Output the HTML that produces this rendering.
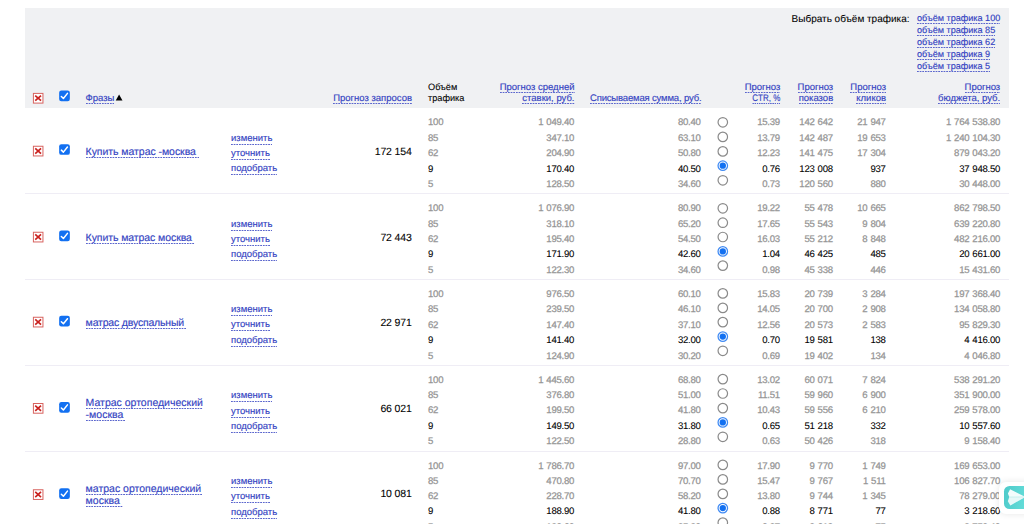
<!DOCTYPE html>
<html lang="ru"><head><meta charset="utf-8"><title>Прогноз бюджета</title>
<style>
html,body{margin:0;padding:0;background:#fff;width:1024px;height:524px;overflow:hidden;}
#w{width:1024px;height:524px;overflow:hidden;position:relative;font-family:"Liberation Sans",sans-serif;color:#000;text-rendering:geometricPrecision;}
.hd{position:absolute;left:25px;top:8px;width:984px;height:100px;background:#f0f1f3;}
.t{position:absolute;white-space:nowrap;line-height:12px;-webkit-text-stroke:0.25px currentColor;}
.r{text-align:right;}
.n{font-size:9.6px;letter-spacing:-0.26px;word-spacing:0.6px;}
.l{color:#3443c2;font-size:9.5px;letter-spacing:0px;-webkit-text-stroke-width:0.15px;}
.l span{background-image:linear-gradient(to right,#5a65cd 60%,rgba(255,255,255,0) 60%);background-size:2.67px 1px;background-repeat:repeat-x;background-position:0 100%;padding-bottom:1px;}
.hb{font-size:9.2px;}
.sb{font-size:10px;letter-spacing:0px;}
.sl{font-size:9.1px;letter-spacing:0px;}
.g{color:#959595;}
.b{color:#000;-webkit-text-stroke-width:0.08px;}
.big{font-size:10.5px;letter-spacing:-0.14px;color:#000;-webkit-text-stroke-width:0.08px;}
.ph{font-size:10.5px;letter-spacing:0px;}
.ph span,.hl span{padding-bottom:0px;}
.sep{position:absolute;left:25px;width:984px;height:1px;background:#efedf5;}
.x{position:absolute;width:9px;height:9px;border:1px solid #d8635f;background:#fff;}
.x svg,.cb svg{position:absolute;left:0;top:0;}
.cb{position:absolute;width:11px;height:11px;border-radius:2px;background:#1270f1;}
.rd{position:absolute;box-sizing:border-box;width:10.7px;height:10.7px;border-radius:50%;border:1.2px solid #8a8a8a;background:#fff;}
.rd.on{border-color:#1270f1;border-width:1.25px;}
.rd.on i{position:absolute;left:50%;top:50%;width:5.6px;height:5.6px;margin:-2.8px 0 0 -2.8px;border-radius:50%;background:#1270f1;}
.rs{position:absolute;}
.fl{position:absolute;left:999px;top:481.5px;width:40px;height:32px;border-radius:7px;background:#fff;box-shadow:0 0 7px rgba(0,0,0,0.10);}
.fl b{position:absolute;left:5px;top:4.8px;width:36px;height:22.4px;border-radius:5.5px;background:linear-gradient(100deg,#4ecaca,#63dcd8 60%);display:block;}
</style></head><body><div id="w">

<div class="hd"></div>
<svg class="rs" width="14" height="14" style="left:31px;top:91px"><rect x="2.4" y="2.4" width="9.55" height="9.7" fill="#fff" stroke="#d8635f" stroke-width="1"/><path d="M4.23 4.6L10.03 9.7M10.03 4.6L4.23 9.7" stroke="#c9211e" stroke-width="1.7" fill="none"/></svg>
<svg class="rs" width="14" height="14" style="left:58px;top:89px"><rect x="1.15" y="1.5" width="10.7" height="10.7" rx="2.2" fill="#1270f1"/><path d="M3.35 7.5L5.4 9.5L9.45 4.4" stroke="#fff" stroke-width="1.5" fill="none" stroke-linecap="round" stroke-linejoin="round"/></svg>
<div class="t l hl" style="left:85.5px;top:93px"><span>Фразы</span><svg width="8" height="7" viewBox="0 0 8 7" style="margin-left:1px"><path d="M0.7 6.6L4.1 0.4L7.5 6.6Z" fill="#000"/></svg></div>
<div class="t r l hl" style="right:612px;top:93px"><span>Прогноз запросов</span></div>
<div class="t hb b" style="left:428px;top:81px">Объём</div>
<div class="t hb b" style="left:428px;top:92px">трафика</div>
<div class="t r l hl" style="right:449.5px;top:82px"><span>Прогноз средней</span></div>
<div class="t r l hl" style="right:449.5px;top:93px"><span>ставки, руб.</span></div>
<div class="t r l hl" style="right:322.6px;top:93px;letter-spacing:-0.16px"><span>Списываемая сумма, руб.</span></div>
<div class="t r l hl" style="right:243.7px;top:82px"><span>Прогноз</span></div>
<div class="t r l hl" style="right:243.7px;top:93px;transform:scaleX(0.84);transform-origin:100% 50%"><span>CTR, %</span></div>
<div class="t r l hl" style="right:190.8px;top:82px"><span>Прогноз</span></div>
<div class="t r l hl" style="right:190.8px;top:93px"><span>показов</span></div>
<div class="t r l hl" style="right:138px;top:82px"><span>Прогноз</span></div>
<div class="t r l hl" style="right:138px;top:93px"><span>кликов</span></div>
<div class="t r l hl" style="right:23.8px;top:82px"><span>Прогноз</span></div>
<div class="t r l hl" style="right:23.8px;top:93px"><span>бюджета, руб.</span></div>
<div class="t r sb b" style="right:114.5px;top:14px">Выбрать объём трафика:</div>
<div class="t l sl" style="left:917px;top:12px"><span>объём трафика 100</span></div>
<div class="t l sl" style="left:917px;top:24px"><span>объём трафика 85</span></div>
<div class="t l sl" style="left:917px;top:36px"><span>объём трафика 62</span></div>
<div class="t l sl" style="left:917px;top:48px"><span>объём трафика 9</span></div>
<div class="t l sl" style="left:917px;top:60px"><span>объём трафика 5</span></div>
<svg class="rs" width="14" height="14" style="left:31px;top:144px"><rect x="2.4" y="2.25" width="9.55" height="9.7" fill="#fff" stroke="#d8635f" stroke-width="1"/><path d="M4.23 4.45L10.03 9.55M10.03 4.45L4.23 9.55" stroke="#c9211e" stroke-width="1.7" fill="none"/></svg>
<svg class="rs" width="14" height="14" style="left:58px;top:143px"><rect x="1.15" y="1.15" width="10.7" height="10.7" rx="2.2" fill="#1270f1"/><path d="M3.35 7.15L5.4 9.15L9.45 4.05" stroke="#fff" stroke-width="1.5" fill="none" stroke-linecap="round" stroke-linejoin="round"/></svg>
<div class="t l ph" style="left:85.6px;top:146px;letter-spacing:-0.05px"><span style="padding-right:3px">Купить матрас -москва</span></div>
<div class="t l" style="left:231px;top:133px"><span>изменить</span></div>
<div class="t l" style="left:231px;top:148px"><span>уточнить</span></div>
<div class="t l" style="left:231px;top:163px"><span>подобрать</span></div>
<div class="t r big" style="right:612.3px;top:146px">172 154</div>
<div class="t n g" style="left:428px;top:117px">100</div>
<div class="t r n g" style="right:449.9px;top:117px">1 049.40</div>
<div class="t r n g" style="right:323.4px;top:117px">80.40</div>
<div class="t r n g" style="right:244.1px;top:117px">15.39</div>
<div class="t r n g" style="right:191.2px;top:117px">142 642</div>
<div class="t r n g" style="right:138.4px;top:117px">21 947</div>
<div class="t r n g" style="right:23.9px;top:117px">1 764 538.80</div>
<svg class="rs" width="14" height="14" style="left:715px;top:115px"><circle cx="7.8" cy="7.3" r="4.75" fill="#fff" stroke="#8a8a8a" stroke-width="1.2"/></svg>
<div class="t n g" style="left:428px;top:133px">85</div>
<div class="t r n g" style="right:449.9px;top:133px">347.10</div>
<div class="t r n g" style="right:323.4px;top:133px">63.10</div>
<div class="t r n g" style="right:244.1px;top:133px">13.79</div>
<div class="t r n g" style="right:191.2px;top:133px">142 487</div>
<div class="t r n g" style="right:138.4px;top:133px">19 653</div>
<div class="t r n g" style="right:23.9px;top:133px">1 240 104.30</div>
<svg class="rs" width="14" height="14" style="left:715px;top:129px"><circle cx="7.8" cy="7.9" r="4.75" fill="#fff" stroke="#8a8a8a" stroke-width="1.2"/></svg>
<div class="t n g" style="left:428px;top:148px">62</div>
<div class="t r n g" style="right:449.9px;top:148px">204.90</div>
<div class="t r n g" style="right:323.4px;top:148px">50.80</div>
<div class="t r n g" style="right:244.1px;top:148px">12.23</div>
<div class="t r n g" style="right:191.2px;top:148px">141 475</div>
<div class="t r n g" style="right:138.4px;top:148px">17 304</div>
<div class="t r n g" style="right:23.9px;top:148px">879 043.20</div>
<svg class="rs" width="14" height="14" style="left:715px;top:144px"><circle cx="7.8" cy="7.4" r="4.75" fill="#fff" stroke="#8a8a8a" stroke-width="1.2"/></svg>
<div class="t n b" style="left:428px;top:164px">9</div>
<div class="t r n b" style="right:449.9px;top:164px">170.40</div>
<div class="t r n b" style="right:323.4px;top:164px">40.50</div>
<div class="t r n b" style="right:244.1px;top:164px">0.76</div>
<div class="t r n b" style="right:191.2px;top:164px">123 008</div>
<div class="t r n b" style="right:138.4px;top:164px">937</div>
<div class="t r n b" style="right:23.9px;top:164px">37 948.50</div>
<svg class="rs" width="14" height="14" style="left:715px;top:158px"><circle cx="7.8" cy="7.7" r="4.75" fill="#fff" stroke="#3f8af4" stroke-width="1.25"/><circle cx="7.8" cy="7.7" r="3.15" fill="#1270f1"/></svg>
<div class="t n g" style="left:428px;top:179px">5</div>
<div class="t r n g" style="right:449.9px;top:179px">128.50</div>
<div class="t r n g" style="right:323.4px;top:179px">34.60</div>
<div class="t r n g" style="right:244.1px;top:179px">0.73</div>
<div class="t r n g" style="right:191.2px;top:179px">120 560</div>
<div class="t r n g" style="right:138.4px;top:179px">880</div>
<div class="t r n g" style="right:23.9px;top:179px">30 448.00</div>
<svg class="rs" width="14" height="14" style="left:715px;top:173px"><circle cx="7.8" cy="7.3" r="4.75" fill="#fff" stroke="#8a8a8a" stroke-width="1.2"/></svg>
<div class="sep" style="top:193px"></div>
<svg class="rs" width="14" height="14" style="left:31px;top:230px"><rect x="2.4" y="2.25" width="9.55" height="9.7" fill="#fff" stroke="#d8635f" stroke-width="1"/><path d="M4.23 4.45L10.03 9.55M10.03 4.45L4.23 9.55" stroke="#c9211e" stroke-width="1.7" fill="none"/></svg>
<svg class="rs" width="14" height="14" style="left:58px;top:229px"><rect x="1.15" y="1.5" width="10.7" height="10.7" rx="2.2" fill="#1270f1"/><path d="M3.35 7.5L5.4 9.5L9.45 4.4" stroke="#fff" stroke-width="1.5" fill="none" stroke-linecap="round" stroke-linejoin="round"/></svg>
<div class="t l ph" style="left:85.6px;top:232px;letter-spacing:-0.08px"><span style="padding-right:3px">Купить матрас москва</span></div>
<div class="t l" style="left:231px;top:219px"><span>изменить</span></div>
<div class="t l" style="left:231px;top:234px"><span>уточнить</span></div>
<div class="t l" style="left:231px;top:249px"><span>подобрать</span></div>
<div class="t r big" style="right:612.3px;top:232px">72 443</div>
<div class="t n g" style="left:428px;top:203px">100</div>
<div class="t r n g" style="right:449.9px;top:203px">1 076.90</div>
<div class="t r n g" style="right:323.4px;top:203px">80.90</div>
<div class="t r n g" style="right:244.1px;top:203px">19.22</div>
<div class="t r n g" style="right:191.2px;top:203px">55 478</div>
<div class="t r n g" style="right:138.4px;top:203px">10 665</div>
<div class="t r n g" style="right:23.9px;top:203px">862 798.50</div>
<svg class="rs" width="14" height="14" style="left:715px;top:201px"><circle cx="7.8" cy="7.3" r="4.75" fill="#fff" stroke="#8a8a8a" stroke-width="1.2"/></svg>
<div class="t n g" style="left:428px;top:219px">85</div>
<div class="t r n g" style="right:449.9px;top:219px">318.10</div>
<div class="t r n g" style="right:323.4px;top:219px">65.20</div>
<div class="t r n g" style="right:244.1px;top:219px">17.65</div>
<div class="t r n g" style="right:191.2px;top:219px">55 543</div>
<div class="t r n g" style="right:138.4px;top:219px">9 804</div>
<div class="t r n g" style="right:23.9px;top:219px">639 220.80</div>
<svg class="rs" width="14" height="14" style="left:715px;top:215px"><circle cx="7.8" cy="7.7" r="4.75" fill="#fff" stroke="#8a8a8a" stroke-width="1.2"/></svg>
<div class="t n g" style="left:428px;top:234px">62</div>
<div class="t r n g" style="right:449.9px;top:234px">195.40</div>
<div class="t r n g" style="right:323.4px;top:234px">54.50</div>
<div class="t r n g" style="right:244.1px;top:234px">16.03</div>
<div class="t r n g" style="right:191.2px;top:234px">55 212</div>
<div class="t r n g" style="right:138.4px;top:234px">8 848</div>
<div class="t r n g" style="right:23.9px;top:234px">482 216.00</div>
<svg class="rs" width="14" height="14" style="left:715px;top:230px"><circle cx="7.8" cy="7.0" r="4.75" fill="#fff" stroke="#8a8a8a" stroke-width="1.2"/></svg>
<div class="t n b" style="left:428px;top:249px">9</div>
<div class="t r n b" style="right:449.9px;top:249px">171.90</div>
<div class="t r n b" style="right:323.4px;top:249px">42.60</div>
<div class="t r n b" style="right:244.1px;top:249px">1.04</div>
<div class="t r n b" style="right:191.2px;top:249px">46 425</div>
<div class="t r n b" style="right:138.4px;top:249px">485</div>
<div class="t r n b" style="right:23.9px;top:249px">20 661.00</div>
<svg class="rs" width="14" height="14" style="left:715px;top:244px"><circle cx="7.8" cy="7.4" r="4.75" fill="#fff" stroke="#3f8af4" stroke-width="1.25"/><circle cx="7.8" cy="7.4" r="3.15" fill="#1270f1"/></svg>
<div class="t n g" style="left:428px;top:265px">5</div>
<div class="t r n g" style="right:449.9px;top:265px">122.30</div>
<div class="t r n g" style="right:323.4px;top:265px">34.60</div>
<div class="t r n g" style="right:244.1px;top:265px">0.98</div>
<div class="t r n g" style="right:191.2px;top:265px">45 338</div>
<div class="t r n g" style="right:138.4px;top:265px">446</div>
<div class="t r n g" style="right:23.9px;top:265px">15 431.60</div>
<svg class="rs" width="14" height="14" style="left:715px;top:258px"><circle cx="7.8" cy="7.6" r="4.75" fill="#fff" stroke="#8a8a8a" stroke-width="1.2"/></svg>
<div class="sep" style="top:279px"></div>
<svg class="rs" width="14" height="14" style="left:31px;top:315px"><rect x="2.4" y="2.25" width="9.55" height="9.7" fill="#fff" stroke="#d8635f" stroke-width="1"/><path d="M4.23 4.45L10.03 9.55M10.03 4.45L4.23 9.55" stroke="#c9211e" stroke-width="1.7" fill="none"/></svg>
<svg class="rs" width="14" height="14" style="left:58px;top:314px"><rect x="1.15" y="1.8" width="10.7" height="10.7" rx="2.2" fill="#1270f1"/><path d="M3.35 7.8L5.4 9.8L9.45 4.7" stroke="#fff" stroke-width="1.5" fill="none" stroke-linecap="round" stroke-linejoin="round"/></svg>
<div class="t l ph" style="left:85.6px;top:317px;letter-spacing:-0.18px"><span style="padding-right:3px">матрас двуспальный</span></div>
<div class="t l" style="left:231px;top:304px"><span>изменить</span></div>
<div class="t l" style="left:231px;top:319px"><span>уточнить</span></div>
<div class="t l" style="left:231px;top:335px"><span>подобрать</span></div>
<div class="t r big" style="right:612.3px;top:317px">22 971</div>
<div class="t n g" style="left:428px;top:289px">100</div>
<div class="t r n g" style="right:449.9px;top:289px">976.50</div>
<div class="t r n g" style="right:323.4px;top:289px">60.10</div>
<div class="t r n g" style="right:244.1px;top:289px">15.83</div>
<div class="t r n g" style="right:191.2px;top:289px">20 739</div>
<div class="t r n g" style="right:138.4px;top:289px">3 284</div>
<div class="t r n g" style="right:23.9px;top:289px">197 368.40</div>
<svg class="rs" width="14" height="14" style="left:715px;top:286px"><circle cx="7.8" cy="7.4" r="4.75" fill="#fff" stroke="#8a8a8a" stroke-width="1.2"/></svg>
<div class="t n g" style="left:428px;top:304px">85</div>
<div class="t r n g" style="right:449.9px;top:304px">239.50</div>
<div class="t r n g" style="right:323.4px;top:304px">46.10</div>
<div class="t r n g" style="right:244.1px;top:304px">14.05</div>
<div class="t r n g" style="right:191.2px;top:304px">20 700</div>
<div class="t r n g" style="right:138.4px;top:304px">2 908</div>
<div class="t r n g" style="right:23.9px;top:304px">134 058.80</div>
<svg class="rs" width="14" height="14" style="left:715px;top:300px"><circle cx="7.8" cy="7.9" r="4.75" fill="#fff" stroke="#8a8a8a" stroke-width="1.2"/></svg>
<div class="t n g" style="left:428px;top:320px">62</div>
<div class="t r n g" style="right:449.9px;top:320px">147.40</div>
<div class="t r n g" style="right:323.4px;top:320px">37.10</div>
<div class="t r n g" style="right:244.1px;top:320px">12.56</div>
<div class="t r n g" style="right:191.2px;top:320px">20 573</div>
<div class="t r n g" style="right:138.4px;top:320px">2 583</div>
<div class="t r n g" style="right:23.9px;top:320px">95 829.30</div>
<svg class="rs" width="14" height="14" style="left:715px;top:315px"><circle cx="7.8" cy="7.1" r="4.75" fill="#fff" stroke="#8a8a8a" stroke-width="1.2"/></svg>
<div class="t n b" style="left:428px;top:335px">9</div>
<div class="t r n b" style="right:449.9px;top:335px">141.40</div>
<div class="t r n b" style="right:323.4px;top:335px">32.00</div>
<div class="t r n b" style="right:244.1px;top:335px">0.70</div>
<div class="t r n b" style="right:191.2px;top:335px">19 581</div>
<div class="t r n b" style="right:138.4px;top:335px">138</div>
<div class="t r n b" style="right:23.9px;top:335px">4 416.00</div>
<svg class="rs" width="14" height="14" style="left:715px;top:329px"><circle cx="7.8" cy="7.6" r="4.75" fill="#fff" stroke="#3f8af4" stroke-width="1.25"/><circle cx="7.8" cy="7.6" r="3.15" fill="#1270f1"/></svg>
<div class="t n g" style="left:428px;top:351px">5</div>
<div class="t r n g" style="right:449.9px;top:351px">124.90</div>
<div class="t r n g" style="right:323.4px;top:351px">30.20</div>
<div class="t r n g" style="right:244.1px;top:351px">0.69</div>
<div class="t r n g" style="right:191.2px;top:351px">19 402</div>
<div class="t r n g" style="right:138.4px;top:351px">134</div>
<div class="t r n g" style="right:23.9px;top:351px">4 046.80</div>
<svg class="rs" width="14" height="14" style="left:715px;top:343px"><circle cx="7.8" cy="7.8" r="4.75" fill="#fff" stroke="#8a8a8a" stroke-width="1.2"/></svg>
<div class="sep" style="top:365px"></div>
<svg class="rs" width="14" height="14" style="left:31px;top:402px"><rect x="2.4" y="1.5" width="9.55" height="9.7" fill="#fff" stroke="#d8635f" stroke-width="1"/><path d="M4.23 3.7L10.03 8.8M10.03 3.7L4.23 8.8" stroke="#c9211e" stroke-width="1.7" fill="none"/></svg>
<svg class="rs" width="14" height="14" style="left:58px;top:401px"><rect x="1.15" y="1.0" width="10.7" height="10.7" rx="2.2" fill="#1270f1"/><path d="M3.35 7.0L5.4 9.0L9.45 3.9" stroke="#fff" stroke-width="1.5" fill="none" stroke-linecap="round" stroke-linejoin="round"/></svg>
<div class="t l ph" style="left:85.6px;top:397px"><span style="padding-right:0.5px">Матрас ортопедический</span></div>
<div class="t l ph" style="left:85.6px;top:409px"><span style="padding-right:1.5px">-москва</span></div>
<div class="t l" style="left:231px;top:390px"><span>изменить</span></div>
<div class="t l" style="left:231px;top:406px"><span>уточнить</span></div>
<div class="t l" style="left:231px;top:421px"><span>подобрать</span></div>
<div class="t r big" style="right:612.3px;top:403px">66 021</div>
<div class="t n g" style="left:428px;top:375px">100</div>
<div class="t r n g" style="right:449.9px;top:375px">1 445.60</div>
<div class="t r n g" style="right:323.4px;top:375px">68.80</div>
<div class="t r n g" style="right:244.1px;top:375px">13.02</div>
<div class="t r n g" style="right:191.2px;top:375px">60 071</div>
<div class="t r n g" style="right:138.4px;top:375px">7 824</div>
<div class="t r n g" style="right:23.9px;top:375px">538 291.20</div>
<svg class="rs" width="14" height="14" style="left:715px;top:372px"><circle cx="7.8" cy="7.1" r="4.75" fill="#fff" stroke="#8a8a8a" stroke-width="1.2"/></svg>
<div class="t n g" style="left:428px;top:390px">85</div>
<div class="t r n g" style="right:449.9px;top:390px">376.80</div>
<div class="t r n g" style="right:323.4px;top:390px">51.00</div>
<div class="t r n g" style="right:244.1px;top:390px">11.51</div>
<div class="t r n g" style="right:191.2px;top:390px">59 960</div>
<div class="t r n g" style="right:138.4px;top:390px">6 900</div>
<div class="t r n g" style="right:23.9px;top:390px">351 900.00</div>
<svg class="rs" width="14" height="14" style="left:715px;top:386px"><circle cx="7.8" cy="7.5" r="4.75" fill="#fff" stroke="#8a8a8a" stroke-width="1.2"/></svg>
<div class="t n g" style="left:428px;top:405px">62</div>
<div class="t r n g" style="right:449.9px;top:405px">199.50</div>
<div class="t r n g" style="right:323.4px;top:405px">41.80</div>
<div class="t r n g" style="right:244.1px;top:405px">10.43</div>
<div class="t r n g" style="right:191.2px;top:405px">59 556</div>
<div class="t r n g" style="right:138.4px;top:405px">6 210</div>
<div class="t r n g" style="right:23.9px;top:405px">259 578.00</div>
<svg class="rs" width="14" height="14" style="left:715px;top:401px"><circle cx="7.8" cy="7.1" r="4.75" fill="#fff" stroke="#8a8a8a" stroke-width="1.2"/></svg>
<div class="t n b" style="left:428px;top:421px">9</div>
<div class="t r n b" style="right:449.9px;top:421px">149.50</div>
<div class="t r n b" style="right:323.4px;top:421px">31.80</div>
<div class="t r n b" style="right:244.1px;top:421px">0.65</div>
<div class="t r n b" style="right:191.2px;top:421px">51 218</div>
<div class="t r n b" style="right:138.4px;top:421px">332</div>
<div class="t r n b" style="right:23.9px;top:421px">10 557.60</div>
<svg class="rs" width="14" height="14" style="left:715px;top:415px"><circle cx="7.8" cy="7.4" r="4.75" fill="#fff" stroke="#3f8af4" stroke-width="1.25"/><circle cx="7.8" cy="7.4" r="3.15" fill="#1270f1"/></svg>
<div class="t n g" style="left:428px;top:436px">5</div>
<div class="t r n g" style="right:449.9px;top:436px">122.50</div>
<div class="t r n g" style="right:323.4px;top:436px">28.80</div>
<div class="t r n g" style="right:244.1px;top:436px">0.63</div>
<div class="t r n g" style="right:191.2px;top:436px">50 426</div>
<div class="t r n g" style="right:138.4px;top:436px">318</div>
<div class="t r n g" style="right:23.9px;top:436px">9 158.40</div>
<svg class="rs" width="14" height="14" style="left:715px;top:429px"><circle cx="7.8" cy="7.8" r="4.75" fill="#fff" stroke="#8a8a8a" stroke-width="1.2"/></svg>
<div class="sep" style="top:451px"></div>
<svg class="rs" width="14" height="14" style="left:31px;top:488px"><rect x="2.4" y="1.75" width="9.55" height="9.7" fill="#fff" stroke="#d8635f" stroke-width="1"/><path d="M4.23 3.95L10.03 9.05M10.03 3.95L4.23 9.05" stroke="#c9211e" stroke-width="1.7" fill="none"/></svg>
<svg class="rs" width="14" height="14" style="left:58px;top:487px"><rect x="1.15" y="1.2" width="10.7" height="10.7" rx="2.2" fill="#1270f1"/><path d="M3.35 7.2L5.4 9.2L9.45 4.1" stroke="#fff" stroke-width="1.5" fill="none" stroke-linecap="round" stroke-linejoin="round"/></svg>
<div class="t l ph" style="left:85.6px;top:483px"><span style="padding-right:0.5px">матрас ортопедический</span></div>
<div class="t l ph" style="left:85.6px;top:495px"><span style="padding-right:3px">москва</span></div>
<div class="t l" style="left:231px;top:476px"><span>изменить</span></div>
<div class="t l" style="left:231px;top:491px"><span>уточнить</span></div>
<div class="t l" style="left:231px;top:507px"><span>подобрать</span></div>
<div class="t r big" style="right:612.3px;top:488px">10 081</div>
<div class="t n g" style="left:428px;top:461px">100</div>
<div class="t r n g" style="right:449.9px;top:461px">1 786.70</div>
<div class="t r n g" style="right:323.4px;top:461px">97.00</div>
<div class="t r n g" style="right:244.1px;top:461px">17.90</div>
<div class="t r n g" style="right:191.2px;top:461px">9 770</div>
<div class="t r n g" style="right:138.4px;top:461px">1 749</div>
<div class="t r n g" style="right:23.9px;top:461px">169 653.00</div>
<svg class="rs" width="14" height="14" style="left:715px;top:457px"><circle cx="7.8" cy="7.9" r="4.75" fill="#fff" stroke="#8a8a8a" stroke-width="1.2"/></svg>
<div class="t n g" style="left:428px;top:476px">85</div>
<div class="t r n g" style="right:449.9px;top:476px">470.80</div>
<div class="t r n g" style="right:323.4px;top:476px">70.70</div>
<div class="t r n g" style="right:244.1px;top:476px">15.47</div>
<div class="t r n g" style="right:191.2px;top:476px">9 767</div>
<div class="t r n g" style="right:138.4px;top:476px">1 511</div>
<div class="t r n g" style="right:23.9px;top:476px">106 827.70</div>
<svg class="rs" width="14" height="14" style="left:715px;top:472px"><circle cx="7.8" cy="7.4" r="4.75" fill="#fff" stroke="#8a8a8a" stroke-width="1.2"/></svg>
<div class="t n g" style="left:428px;top:491px">62</div>
<div class="t r n g" style="right:449.9px;top:491px">228.70</div>
<div class="t r n g" style="right:323.4px;top:491px">58.20</div>
<div class="t r n g" style="right:244.1px;top:491px">13.80</div>
<div class="t r n g" style="right:191.2px;top:491px">9 744</div>
<div class="t r n g" style="right:138.4px;top:491px">1 345</div>
<div class="t r n g" style="right:23.9px;top:491px">78 279.00</div>
<svg class="rs" width="14" height="14" style="left:715px;top:486px"><circle cx="7.8" cy="7.9" r="4.75" fill="#fff" stroke="#8a8a8a" stroke-width="1.2"/></svg>
<div class="t n b" style="left:428px;top:506px">9</div>
<div class="t r n b" style="right:449.9px;top:506px">188.90</div>
<div class="t r n b" style="right:323.4px;top:506px">41.80</div>
<div class="t r n b" style="right:244.1px;top:506px">0.88</div>
<div class="t r n b" style="right:191.2px;top:506px">8 771</div>
<div class="t r n b" style="right:138.4px;top:506px">77</div>
<div class="t r n b" style="right:23.9px;top:506px">3 218.60</div>
<svg class="rs" width="14" height="14" style="left:715px;top:501px"><circle cx="7.8" cy="7.1" r="4.75" fill="#fff" stroke="#3f8af4" stroke-width="1.25"/><circle cx="7.8" cy="7.1" r="3.15" fill="#1270f1"/></svg>
<div class="t n g" style="left:428px;top:522px">5</div>
<div class="t r n g" style="right:449.9px;top:522px">130.60</div>
<div class="t r n g" style="right:323.4px;top:522px">35.20</div>
<div class="t r n g" style="right:244.1px;top:522px">0.87</div>
<div class="t r n g" style="right:191.2px;top:522px">8 619</div>
<div class="t r n g" style="right:138.4px;top:522px">75</div>
<div class="t r n g" style="right:23.9px;top:522px">2 758.40</div>
<svg class="rs" width="14" height="14" style="left:715px;top:515px"><circle cx="7.8" cy="7.6" r="4.75" fill="#fff" stroke="#8a8a8a" stroke-width="1.2"/></svg>
<div class="fl"><b><svg width="36" height="23" viewBox="0 0 36 23" style="position:absolute;left:0;top:0"><path d="M6.1 3.3L21.5 10.9L6.4 19.4L3.9 15.3L5.3 11L3.9 7.4Z" fill="#fff" fill-opacity="0.93"/><path d="M5.3 11L21.5 10.9L6.4 19.4L3.9 15.3Z" fill="#c9f0ee" fill-opacity="0.3"/><path d="M5.3 11L21.5 10.9" stroke="#a9e6e3" stroke-width="0.5" fill="none"/></svg></b></div>
</div></body></html>
